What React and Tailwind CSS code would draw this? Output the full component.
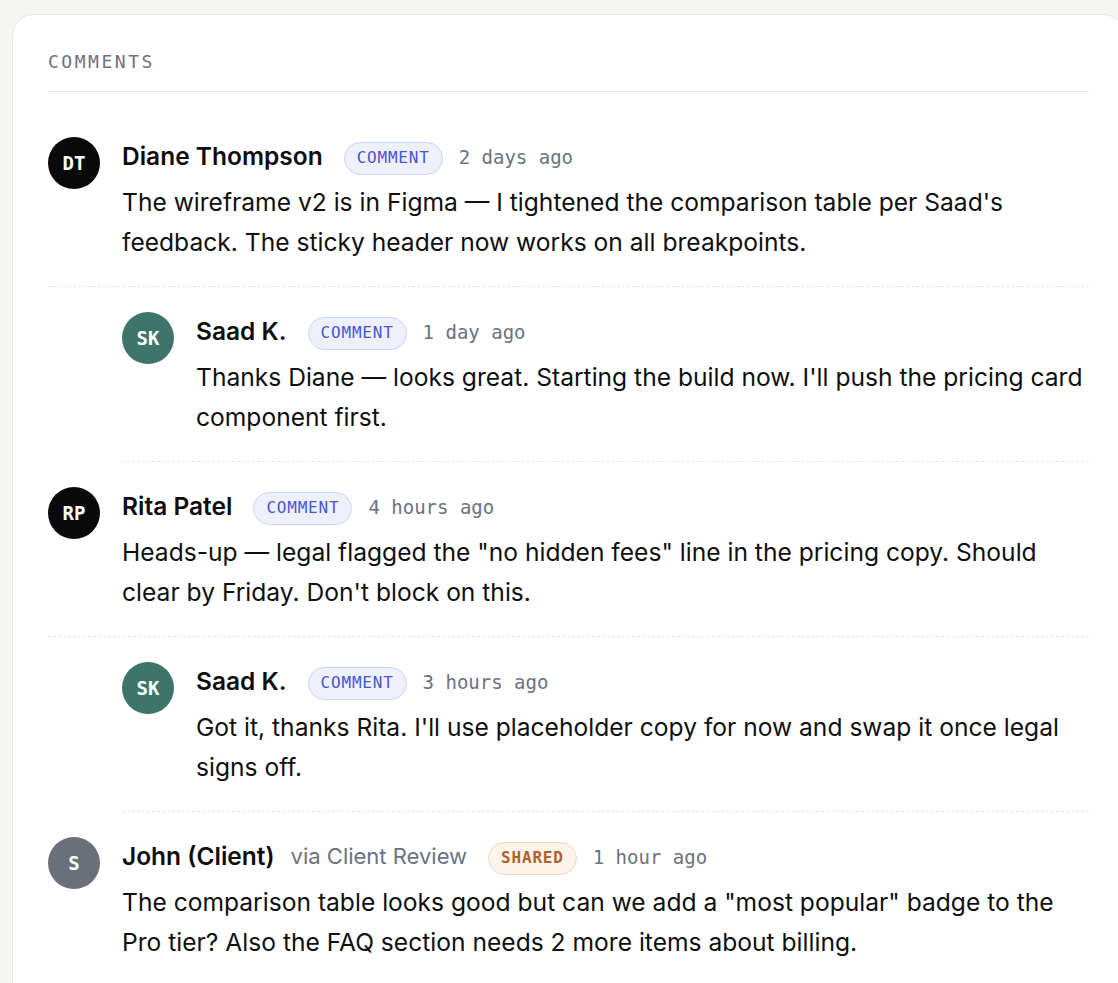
import React from "react";

const mono = { fontFamily: '"DejaVu Sans Mono", "Liberation Mono", monospace' };

function Badge({ kind }) {
  if (kind === "shared") {
    return (
      <span
        className="ml-[5px] mt-[4px] inline-flex h-[33px] items-center rounded-full border border-[#f1d9c4] bg-[#fcf3ea] px-[12px] text-[16px] font-semibold tracking-[0.05em] text-[#b0612a]"
        style={mono}
      >
        SHARED
      </span>
    );
  }
  return (
    <span
      className="ml-[5px] mt-[4px] inline-flex h-[33px] items-center rounded-full border border-[#cdd3f3] bg-[#eef0fc] px-[12px] text-[16px] font-medium tracking-[0.05em] text-[#4a55cf]"
      style={mono}
    >
      COMMENT
    </span>
  );
}

function Avatar({ initials, color }) {
  return (
    <div
      className={`flex h-[52px] w-[52px] shrink-0 items-center justify-center rounded-full ${color} text-[19px] font-bold text-white`}
      style={mono}
    >
      {initials}
    </div>
  );
}

function Comment({ initials, color, name, via, badge, time, children, reply }) {
  return (
    <div
      className={`flex gap-[22px] border-b border-dashed border-[#e6e6e3] pt-[25px] pb-[24px] ${
        reply ? "ml-[74px]" : ""
      }`}
    >
      <Avatar initials={initials} color={color} />
      <div className="min-w-0 flex-1">
        <div className="flex h-[38px] items-center gap-4">
          <span className="text-[24.5px] font-semibold text-[#0d0d0d]">{name}</span>
          {via && <span className="text-[22px] text-[#6b7280]">{via}</span>}
          <Badge kind={badge} />
          <span className="mt-[2px] text-[19px] text-[#6b7280]" style={mono}>
            {time}
          </span>
        </div>
        <p className="mt-[7px] text-[24.6px] leading-[40px] text-[#0f0f0f]">{children}</p>
      </div>
    </div>
  );
}

export default function App() {
  return (
    <div
      className="min-h-screen overflow-hidden bg-[#f5f5f3] pl-[12px] pt-[14px]"
      style={{ fontFamily: 'Inter, "Noto Sans", sans-serif' }}
    >
      <div className="w-[1113px] rounded-[22px] border border-[#e7e7e4] bg-white px-[35px] pt-[35px] pb-[40px]">
        <div className="border-b border-[#e5e5e2] pb-[17px]">
          <h2 className="text-[18px] leading-[24px] tracking-[0.14em] text-[#6b7280]" style={mono}>
            COMMENTS
          </h2>
        </div>
        <div className="mt-[20px]">
          <Comment initials="DT" color="bg-[#0a0a0a]" name="Diane Thompson" badge="comment" time="2 days ago">
            The wireframe v2 is in Figma — I tightened the comparison table per Saad's feedback. The sticky header
            now works on all breakpoints.
          </Comment>
          <Comment reply initials="SK" color="bg-[#3e756b]" name="Saad K." badge="comment" time="1 day ago">
            Thanks Diane — looks great. Starting the build now. I'll push the pricing card component first.
          </Comment>
          <Comment initials="RP" color="bg-[#0a0a0a]" name="Rita Patel" badge="comment" time="4 hours ago">
            Heads-up — legal flagged the "no hidden fees" line in the pricing copy. Should clear by Friday. Don't
            block on this.
          </Comment>
          <Comment reply initials="SK" color="bg-[#3e756b]" name="Saad K." badge="comment" time="3 hours ago">
            Got it, thanks Rita. I'll use placeholder copy for now and swap it once legal signs off.
          </Comment>
          <Comment
            initials="S"
            color="bg-[#6b6f7a]"
            name="John (Client)"
            via="via Client Review"
            badge="shared"
            time="1 hour ago"
          >
            The comparison table looks good but can we add a "most popular" badge to the Pro tier? Also the FAQ
            section needs 2 more items about billing.
          </Comment>
        </div>
      </div>
    </div>
  );
}
